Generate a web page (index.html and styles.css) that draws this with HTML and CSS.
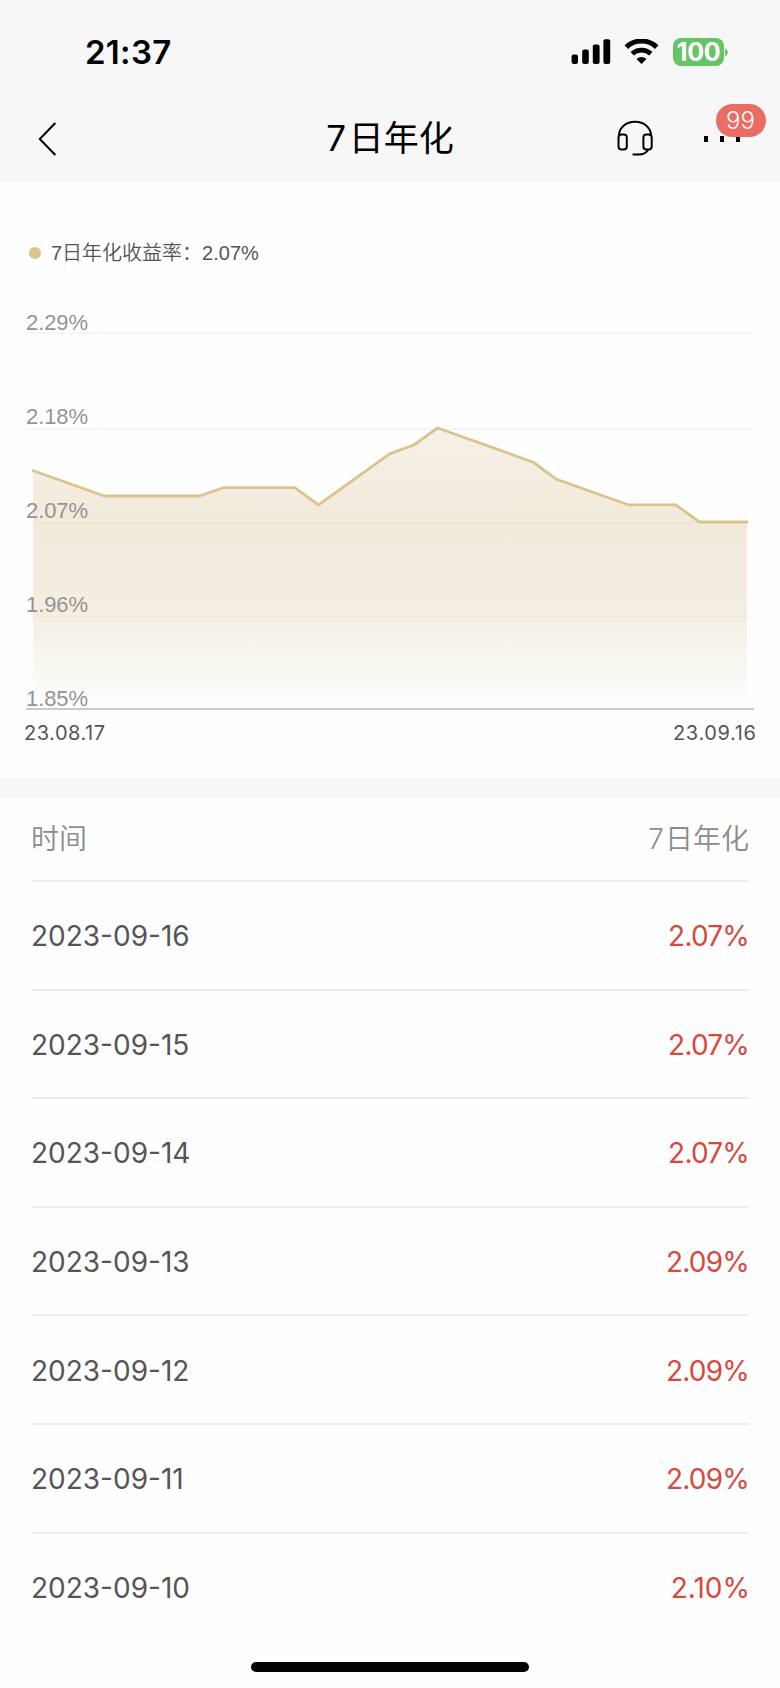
FILE: index.html
```html
<!DOCTYPE html>
<html lang="zh-CN">
<head>
<meta charset="utf-8">
<title>7日年化</title>
<link rel="stylesheet" href="styles.css">
</head>
<body>
<div class="screen">
  <header class="top">
    <div class="status">
      <span class="time">21:37</span>
      <div class="status-icons">
        <svg class="signal" width="40" height="26" viewBox="0 0 40 26">
          <rect x="0.6" y="15.6" width="6.4" height="9.4" rx="2"/>
          <rect x="11.2" y="10.6" width="6.6" height="14.4" rx="2"/>
          <rect x="21.8" y="5.4" width="6.8" height="19.6" rx="2"/>
          <rect x="32.4" y="0.2" width="6.8" height="24.8" rx="2"/>
        </svg>
        <svg class="wifi" width="35" height="26" viewBox="0 0 35 26">
          <path d="M2.3 8.1a22 22 0 0 1 30.4 0" fill="none" stroke="#000" stroke-width="5"/>
          <path d="M8.2 14.8a13.7 13.7 0 0 1 18.6 0" fill="none" stroke="#000" stroke-width="4.8"/>
          <path d="M17.5 25l-5-5a7.4 7.4 0 0 1 10 0z"/>
        </svg>
        <div class="battery"><span class="battery-level">100</span></div>
        <svg class="nub" width="3" height="9" viewBox="0 0 3 9"><path d="M0 0.4q2.8 1.5 2.8 4.1T0 8.6z" fill="#65c466"/></svg>
      </div>
    </div>
    <nav class="nav">
      <svg class="back" width="20" height="36" viewBox="0 0 20 36"><path d="M17.3 2L1.8 18l15.5 16" fill="none" stroke="#000" stroke-width="2"/></svg>
      <h1 class="title"><span class="title-num">7</span>日年化</h1>
      <div class="actions">
        <svg class="headset" width="36" height="37" viewBox="0 0 36 37" fill="none" stroke="#000" stroke-width="2">
          <path d="M2 15.5C2 7.5 9 1.8 18 1.8s16 5.7 16 13.7"/>
          <rect x="1.5" y="14.6" width="8.3" height="14.8" rx="3"/>
          <rect x="26.4" y="14.6" width="8.3" height="14.8" rx="3"/>
          <path d="M31.3 29.4c-1.6 3.6-5.4 5.2-10 5.2h-5.7"/>
        </svg>
        <div class="more">
          <i class="pip"></i><i class="pip"></i><i class="pip"></i>
          <span class="badge">99</span>
        </div>
      </div>
    </nav>
  </header>

  <section class="chart-card">
    <div class="legend"><i class="legend-dot"></i><span>7日年化收益率：2.07%</span></div>
    <svg class="chart" width="780" height="440" viewBox="0 310 780 440">
      <defs>
        <linearGradient id="fill" gradientUnits="userSpaceOnUse" x1="0" y1="428" x2="0" y2="708">
          <stop offset="0" stop-color="#f6f1e8"/>
          <stop offset="0.33" stop-color="#f2eadb"/>
          <stop offset="0.66" stop-color="#f4eee2"/>
          <stop offset="1" stop-color="#fefefe"/>
        </linearGradient>
      </defs>
      <polygon fill="url(#fill)" points="33,470.5 104.3,496 199.5,496 223.3,487.7 294.7,487.7 318.5,504.8 390,453.6 413.8,445 437.6,428 532.8,462 556.6,479.3 628,504.8 675.6,504.8 699.4,522 747,522 747,708 33,708"/>
      <path class="grid" d="M26 333.2H754M26 429.2H754"/>
      <path class="grid grid-soft" d="M26 522.8H754M26 616.6H754"/>
      <path class="axis" d="M26 709H754"/>
      <polyline class="trend" points="32,470.2 104.3,496 199.5,496 223.3,487.7 294.7,487.7 318.5,504.8 390,453.6 413.8,445 437.6,428 532.8,462 556.6,479.3 628,504.8 675.6,504.8 699.4,522 748,522"/>
      <g class="y-labels">
        <text x="26" y="330" textLength="62">2.29%</text>
        <text x="26" y="424" textLength="62">2.18%</text>
        <text x="26" y="518" textLength="62">2.07%</text>
        <text x="26" y="612" textLength="62">1.96%</text>
        <text x="26" y="706" textLength="62">1.85%</text>
      </g>
      <g class="x-labels">
        <text x="24" y="740" textLength="81">23.08.17</text>
        <text x="673" y="740" textLength="83">23.09.16</text>
      </g>
    </svg>
  </section>

  <section class="table">
    <div class="row head"><span>时间</span><span><span class="head-num">7</span>日年化</span></div>
    <div class="row"><span class="date">2023-09-16</span><span class="rate">2.07%</span></div>
    <div class="row"><span class="date">2023-09-15</span><span class="rate">2.07%</span></div>
    <div class="row"><span class="date">2023-09-14</span><span class="rate">2.07%</span></div>
    <div class="row"><span class="date">2023-09-13</span><span class="rate">2.09%</span></div>
    <div class="row"><span class="date">2023-09-12</span><span class="rate">2.09%</span></div>
    <div class="row"><span class="date">2023-09-11</span><span class="rate">2.09%</span></div>
    <div class="row"><span class="date">2023-09-10</span><span class="rate rate-wide">2.10%</span></div>
  </section>
  <div class="home-indicator"></div>
</div>
</body>
</html>
```
FILE: styles.css
```css
* { box-sizing: border-box; }
body { margin: 0; background: #fefefe; }
.screen {
  position: relative;
  width: 780px;
  height: 1688px;
  overflow: hidden;
  background: #fefefe;
  font-family: Inter, "Noto Sans CJK SC", sans-serif;
}
.top { height: 182px; background: #f7f7f7; }
.status {
  height: 96px;
  padding: 8px 52px 0 85px;
  display: flex;
  align-items: center;
  justify-content: space-between;
}
.time { font-size: 33px; line-height: 40px; font-weight: 600; letter-spacing: 0.3px; }
.status-icons { display: flex; align-items: center; }
.wifi { margin-left: 13px; }
.battery {
  width: 51px;
  height: 28px;
  margin-left: 14px;
  border-radius: 8px;
  background: #65c466;
  display: flex;
  align-items: center;
  justify-content: center;
}
.battery-level { color: #fff; font-size: 25px; line-height: 28px; font-weight: 700; letter-spacing: -0.4px; }
.nub { margin-left: 1px; }
.nav {
  height: 86px;
  padding: 0 38px;
  display: grid;
  grid-template-columns: 204px 1fr 204px;
  align-items: center;
}
.title {
  margin: 0;
  padding-bottom: 2px;
  text-align: center;
  font-size: 35px;
  line-height: 50px;
  font-weight: 400;
  white-space: nowrap;
}
.title-num { letter-spacing: 2.5px; }
.actions { display: flex; align-items: center; justify-content: flex-end; gap: 51px; }
.headset { margin-bottom: 1px; }
.more { position: relative; display: flex; gap: 12px; width: 38px; }
.pip { width: 4px; height: 6px; background: #000; flex: none; }
.badge {
  position: absolute;
  left: 11.5px;
  top: -32px;
  width: 50px;
  height: 33px;
  border-radius: 17px;
  background: #eb6b65;
  color: #fff;
  font-size: 24px;
  font-weight: 300;
  line-height: 33px;
  text-align: center;
}
.chart-card { height: 596px; padding-top: 56px; }
.legend {
  height: 30px;
  padding-left: 29px;
  display: flex;
  align-items: center;
  gap: 10px;
  font: 350 20px/30px "Liberation Sans", "Noto Sans CJK SC", sans-serif;
  color: #555;
}
.legend-dot { width: 12px; height: 12px; border-radius: 50%; background: #dcc48c; }
.chart { display: block; margin-top: 42px; }
.grid { stroke: #000; stroke-opacity: 0.04; stroke-width: 1.6; fill: none; }
.grid-soft { stroke-opacity: 0.025; }
.axis { stroke: #ccc9c9; stroke-width: 2; }
.trend { fill: none; stroke: #dac48c; stroke-width: 2.8; stroke-linejoin: round; }
.y-labels { font: 22px "Liberation Sans", sans-serif; fill: #949494; }
.x-labels { font: 20px Inter, sans-serif; fill: #555; }
.table { border-top: 20px solid #f7f7f7; padding: 0 31px; }
.row {
  height: 108.6px;
  padding-top: 2px;
  display: flex;
  align-items: center;
  justify-content: space-between;
  border-bottom: 2px solid #ededed;
  font-size: 28px;
  line-height: 36px;
  color: #555;
}
.row:last-child { border-bottom: 0; padding-top: 0; }
.head { height: 84px; padding-top: 0; color: #8c8c8c; font-weight: 350; }
.head-num { letter-spacing: 1px; }
.rate { color: #d8483e; letter-spacing: -0.8px; }
.rate-wide { letter-spacing: 0; margin-right: -1px; }
.home-indicator {
  position: absolute;
  left: 251px;
  top: 1662px;
  width: 278px;
  height: 10px;
  border-radius: 5px;
  background: #000;
}
```
